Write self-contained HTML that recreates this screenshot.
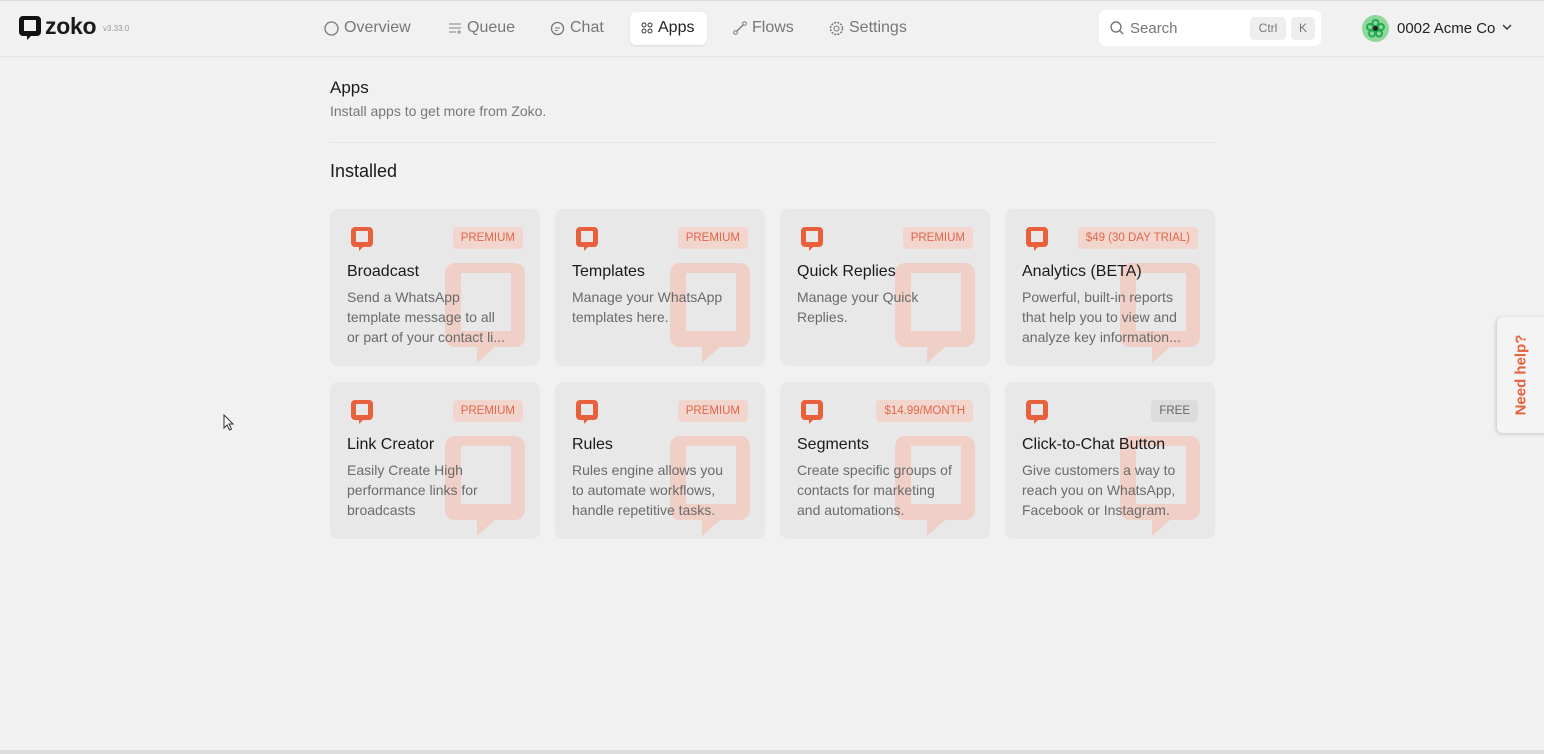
<!DOCTYPE html>
<html><head><meta charset="utf-8"><style>
*{box-sizing:border-box;margin:0;padding:0}
body{width:1544px;height:754px;background:#f1f1f1;font-family:"Liberation Sans",sans-serif;position:relative;overflow:hidden;color:#1a1a1a}
.hdr{position:absolute;left:0;top:0;width:1544px;height:57px;border-bottom:1px solid #e4e4e4;border-top:1px solid #ddd}
.abs{position:absolute}
.nav{position:absolute;top:19px;font-size:16px;color:#777;display:flex;align-items:center;gap:5px}
.card{position:absolute;width:210px;height:157px;background:#e8e8e8;border-radius:8px;overflow:hidden}
.card .ic{position:absolute;left:21px;top:18px}
.card .wm{position:absolute;left:115px;top:54px}
.badge{position:absolute;right:17px;top:18px;height:22px;line-height:22px;padding:0 8px;border-radius:4px;background:#f2d6cd;color:#e0664a;font-size:11.5px}
.badge.free{background:#dcdcdc;color:#666}
.card h3{position:absolute;left:17px;top:54px;font-size:16px;font-weight:normal;color:#1a1a1a}
.card p{position:absolute;left:17px;top:78px;width:180px;font-size:14px;line-height:20px;color:#6a6a6a;white-space:pre}
</style></head><body>
<div class="hdr"></div>
<svg class="abs" style="left:19px;top:16px" width="22" height="24" viewBox="0 0 22 24"><path fill-rule="evenodd" fill="#111" d="M4 0h14a4 4 0 0 1 4 4v12a4 4 0 0 1-4 4h-6l-4 4v-4H4a4 4 0 0 1-4-4V4a4 4 0 0 1 4-4zM5 4v11h12V4z"/></svg>
<div class="abs" style="left:45px;top:13px;font-size:23px;font-weight:bold;letter-spacing:-0.3px">zoko</div>
<div class="abs" style="left:103px;top:24px;font-size:8px;color:#999">v3.33.0</div>
<div class="nav" style="left:324px"><svg width="15" height="15"><circle cx="7.5" cy="7.5" r="6.5" fill="none" stroke="#777" stroke-width="1.3"/></svg>Overview</div>
<div class="nav" style="left:448px"><svg width="14" height="14"><path d="M1 3h12M1 7h12M1 11h7M11 9v4M9 11h4" stroke="#999" stroke-width="1.2" fill="none"/></svg>Queue</div>
<div class="nav" style="left:550px"><svg width="15" height="15"><circle cx="7.5" cy="7.5" r="6" fill="none" stroke="#777" stroke-width="1.3"/><path d="M5 7h5M5 9.5h3" stroke="#777"/></svg>Chat</div>
<div class="abs" style="left:630px;top:12px;width:77px;height:33px;background:#fff;border-radius:6px;box-shadow:0 1px 2px rgba(0,0,0,.1)"></div>
<div class="nav" style="left:641px;color:#222"><svg width="12" height="12"><circle cx="3" cy="3" r="2" fill="none" stroke="#333"/><circle cx="9" cy="3" r="2" fill="none" stroke="#333"/><circle cx="3" cy="9" r="2" fill="none" stroke="#333"/><circle cx="9" cy="9" r="2" fill="none" stroke="#333"/></svg>Apps</div>
<div class="nav" style="left:733px"><svg width="14" height="14"><path d="M2 12L12 2" stroke="#777" stroke-width="1.3"/><circle cx="2.5" cy="11.5" r="1.8" fill="#f1f1f1" stroke="#777"/><circle cx="11.5" cy="2.5" r="1.8" fill="#f1f1f1" stroke="#777"/></svg>Flows</div>
<div class="nav" style="left:829px"><svg width="15" height="15"><circle cx="7.5" cy="7.5" r="6" fill="none" stroke="#777" stroke-width="1.5" stroke-dasharray="2 1.2"/><circle cx="7.5" cy="7.5" r="2.5" fill="none" stroke="#777"/></svg>Settings</div>
<div class="abs" style="left:1099px;top:10px;width:222px;height:36px;background:#fff;border-radius:6px"></div>
<svg class="abs" style="left:1110px;top:21px" width="14" height="14"><circle cx="6" cy="6" r="5" fill="none" stroke="#777" stroke-width="1.4"/><path d="M9.5 9.5L13 13" stroke="#777" stroke-width="1.4"/></svg>
<div class="abs" style="left:1130px;top:20px;font-size:15px;color:#777">Search</div>
<div class="abs" style="left:1250px;top:17px;width:36px;height:23px;background:#eee;border-radius:4px;font-size:12px;color:#777;text-align:center;line-height:23px">Ctrl</div>
<div class="abs" style="left:1291px;top:17px;width:24px;height:23px;background:#eee;border-radius:4px;font-size:12px;color:#777;text-align:center;line-height:23px">K</div>
<div class="abs" style="left:1362px;top:15px;width:27px;height:27px;border-radius:50%;background:#8fd79a"></div>
<svg class="abs" style="left:1366px;top:19px" width="19" height="19"><g fill="none" stroke="#2a5" stroke-width="2"><circle cx="9.5" cy="4" r="3"/><circle cx="4" cy="8" r="3"/><circle cx="15" cy="8" r="3"/><circle cx="6" cy="14.5" r="3"/><circle cx="13" cy="14.5" r="3"/></g><circle cx="9.5" cy="9.5" r="2.5" fill="#222"/></svg>
<div class="abs" style="left:1397px;top:20px;font-size:15px;color:#222">0002 Acme Co</div>
<svg class="abs" style="left:1502px;top:24px" width="10" height="7"><path d="M1 1l4 4 4-4" stroke="#333" stroke-width="1.4" fill="none"/></svg>

<div class="abs" style="left:330px;top:78px;font-size:17px">Apps</div>
<div class="abs" style="left:330px;top:103px;font-size:14px;color:#777">Install apps to get more from Zoko.</div>
<div class="abs" style="left:330px;top:142px;width:886px;height:1px;background:#e6e6e6"></div>
<div class="abs" style="left:330px;top:161px;font-size:18px">Installed</div>

<svg width="0" height="0" style="position:absolute"><defs>
<path id="bub" fill-rule="evenodd" d="M4 0h14a4 4 0 0 1 4 4v12a4 4 0 0 1-4 4h-6l-4 4v-4H4a4 4 0 0 1-4-4V4a4 4 0 0 1 4-4zM5 4v11h12V4z"/>
<path id="wmk" fill-rule="evenodd" d="M10 0h60a10 10 0 0 1 10 10v64a10 10 0 0 1-10 10H50l-18 16V84H10A10 10 0 0 1 0 74V10A10 10 0 0 1 10 0zM16 10v58h50V10z"/>
</defs></svg>

<div class="card" style="left:330px;top:209px"><svg class="wm" width="80" height="100"><use href="#wmk" fill="#f0cfc6"/></svg><svg class="ic" width="22" height="24"><use href="#bub" fill="#e8603c"/></svg><span class="badge">PREMIUM</span><h3>Broadcast</h3><p>Send a WhatsApp
template message to all
or part of your contact li...</p></div>
<div class="card" style="left:555px;top:209px"><svg class="wm" width="80" height="100"><use href="#wmk" fill="#f0cfc6"/></svg><svg class="ic" width="22" height="24"><use href="#bub" fill="#e8603c"/></svg><span class="badge">PREMIUM</span><h3>Templates</h3><p>Manage your WhatsApp
templates here.</p></div>
<div class="card" style="left:780px;top:209px"><svg class="wm" width="80" height="100"><use href="#wmk" fill="#f0cfc6"/></svg><svg class="ic" width="22" height="24"><use href="#bub" fill="#e8603c"/></svg><span class="badge">PREMIUM</span><h3>Quick Replies</h3><p>Manage your Quick
Replies.</p></div>
<div class="card" style="left:1005px;top:209px"><svg class="wm" width="80" height="100"><use href="#wmk" fill="#f0cfc6"/></svg><svg class="ic" width="22" height="24"><use href="#bub" fill="#e8603c"/></svg><span class="badge">$49 (30 DAY TRIAL)</span><h3>Analytics (BETA)</h3><p>Powerful, built-in reports
that help you to view and
analyze key information...</p></div>

<div class="card" style="left:330px;top:382px"><svg class="wm" width="80" height="100"><use href="#wmk" fill="#f0cfc6"/></svg><svg class="ic" width="22" height="24"><use href="#bub" fill="#e8603c"/></svg><span class="badge">PREMIUM</span><h3>Link Creator</h3><p>Easily Create High
performance links for
broadcasts</p></div>
<div class="card" style="left:555px;top:382px"><svg class="wm" width="80" height="100"><use href="#wmk" fill="#f0cfc6"/></svg><svg class="ic" width="22" height="24"><use href="#bub" fill="#e8603c"/></svg><span class="badge">PREMIUM</span><h3>Rules</h3><p>Rules engine allows you
to automate workflows,
handle repetitive tasks.</p></div>
<div class="card" style="left:780px;top:382px"><svg class="wm" width="80" height="100"><use href="#wmk" fill="#f0cfc6"/></svg><svg class="ic" width="22" height="24"><use href="#bub" fill="#e8603c"/></svg><span class="badge">$14.99/MONTH</span><h3>Segments</h3><p>Create specific groups of
contacts for marketing
and automations.</p></div>
<div class="card" style="left:1005px;top:382px"><svg class="wm" width="80" height="100"><use href="#wmk" fill="#f0cfc6"/></svg><svg class="ic" width="22" height="24"><use href="#bub" fill="#e8603c"/></svg><span class="badge free">FREE</span><h3>Click-to-Chat Button</h3><p>Give customers a way to
reach you on WhatsApp,
Facebook or Instagram.</p></div>

<div class="abs" style="left:1497px;top:317px;width:50px;height:116px;background:#f4f4f4;border-radius:6px 0 0 6px;box-shadow:-1px 1px 4px rgba(0,0,0,.18)"></div>
<div class="abs" style="left:1521px;top:375px;transform:translate(-50%,-50%) rotate(-90deg);font-size:15px;font-weight:bold;color:#e8603c;white-space:nowrap">Need help?</div>
<svg class="abs" style="left:223px;top:414px" width="12" height="18"><path d="M1 1v13l3-3 2.5 5 2-1-2.5-5h4z" fill="#fff" stroke="#333"/></svg>
<div class="abs" style="left:0;top:750px;width:1544px;height:4px;background:#ddd"></div>
</body></html>
